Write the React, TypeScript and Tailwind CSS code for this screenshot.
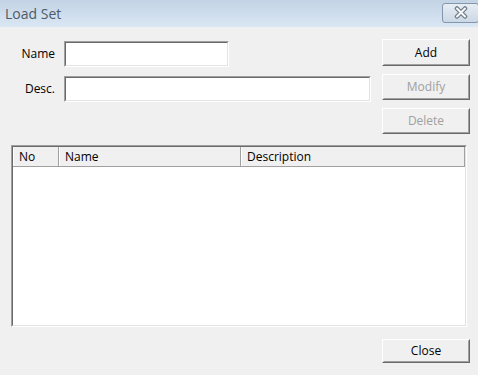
import React from "react";

type BtnProps = {
    label: string;
    disabled?: boolean;
    className?: string;
};

function WinButton({ label, disabled, className }: BtnProps) {
    return (
        <div
            className={`w-[88px] border border-t-white border-l-white border-b-[#696969] border-r-[#696969] ${className ?? ""}`}
        >
            <div className="h-full flex items-center justify-center border border-t-[#f0f0f0] border-l-[#f0f0f0] border-b-[#a0a0a0] border-r-[#a0a0a0] bg-[#f0f0f0]">
                <span
                    className={`text-[12px] ${disabled ? "text-[#a0a0a0]" : "text-black"}`}
                >
                    {label}
                </span>
            </div>
        </div>
    );
}

function Sunken({ className, children }: { className?: string; children?: React.ReactNode }) {
    return (
        <div
            className={`border border-t-[#a0a0a0] border-l-[#a0a0a0] border-b-white border-r-white ${className ?? ""}`}
        >
            <div className="h-full border border-t-[#696969] border-l-[#696969] border-b-[#e3e3e3] border-r-[#e3e3e3] bg-white">
                {children}
            </div>
        </div>
    );
}

function HeaderCell({ label, width }: { label: string; width: string }) {
    return (
        <div
            className={`${width} h-full border-r border-r-[#a0a0a0] border-l border-l-white flex items-center pl-[5px]`}
        >
            <span className="text-[12px] text-black">{label}</span>
        </div>
    );
}

export default function App() {
    return (
        <div
            className="w-[478px] h-[375px] bg-[#f0f0f0] overflow-hidden flex flex-col"
            style={{ fontFamily: '"Open Sans", "Noto Sans", sans-serif' }}
        >
            {/* title bar */}
            <div className="h-[27px] shrink-0 bg-gradient-to-b from-[#c2d3e5] to-[#dae7f4] flex items-center justify-between pl-[5px]">
                <span className="text-[14px] text-[#4d5a68]">Load Set</span>
                <div className="w-[37px] h-[20px] -mr-[1px] mb-[2px] border border-[#8396ab] rounded-[3px] bg-gradient-to-b from-[#e6edf4] to-[#cbd8e5] flex items-center justify-center">
                    <svg width="16" height="13" viewBox="0 0 16 13">
                        <path
                            d="M4 2.5 L12 10.5 M12 2.5 L4 10.5"
                            stroke="#707b88"
                            strokeWidth="4.5"
                            strokeLinecap="round"
                            fill="none"
                        />
                        <path
                            d="M4 2.5 L12 10.5 M12 2.5 L4 10.5"
                            stroke="#f6f8fa"
                            strokeWidth="2"
                            strokeLinecap="round"
                            fill="none"
                        />
                    </svg>
                </div>
            </div>

            {/* form area */}
            <div className="flex items-start pt-[12px] pl-[11px] pr-[8px]">
                <div className="flex flex-col pt-[2px] gap-[9px]">
                    <div className="flex items-center">
                        <span className="w-[44px] text-right text-[12px] text-black">Name</span>
                        <Sunken className="ml-[9px] w-[165px] h-[26px]" />
                    </div>
                    <div className="flex items-center">
                        <span className="w-[44px] text-right text-[12px] text-black">Desc.</span>
                        <Sunken className="ml-[9px] w-[307px] h-[26px]" />
                    </div>
                </div>
                <div className="ml-auto flex flex-col gap-[8px]">
                    <WinButton label="Add" className="h-[27px]" />
                    <WinButton label="Modify" disabled className="h-[26px]" />
                    <WinButton label="Delete" disabled className="h-[26px]" />
                </div>
            </div>

            {/* list */}
            <div className="px-[11px] mt-[11px]">
                <Sunken className="w-[456px] h-[182px]">
                    <div className="h-[20px] flex bg-[#f0f0f0] border-b border-b-[#a0a0a0]">
                        <HeaderCell label="No" width="w-[46px]" />
                        <HeaderCell label="Name" width="w-[182px]" />
                        <HeaderCell label="Description" width="w-[224px]" />
                    </div>
                </Sunken>
            </div>

            {/* bottom */}
            <div className="flex justify-end pr-[8px] mt-[12px]">
                <WinButton label="Close" className="h-[24px]" />
            </div>
        </div>
    );
}
